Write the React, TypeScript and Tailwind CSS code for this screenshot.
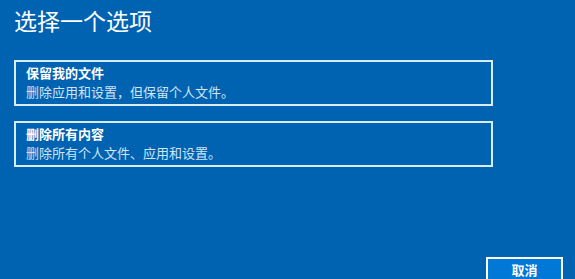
const font = { fontFamily: '"Noto Sans CJK SC", "Noto Sans", sans-serif' };

const options = [
  { title: '保留我的文件', desc: '删除应用和设置，但保留个人文件。' },
  { title: '删除所有内容', desc: '删除所有个人文件、应用和设置。' },
];

export default function App() {
  return (
    <div className="w-[575px] h-[279px] overflow-hidden bg-[#0063b1] text-white" style={font}>
      <div className="pl-[14px] pr-[82px] pt-[5px]">
        <h1 className="text-[23px] leading-[30px]">选择一个选项</h1>
        <div className="mt-[25px] flex flex-col gap-[15px]">
          {options.map((o) => (
            <div key={o.title} className="h-[46px] border-2 border-[#d6ecff] pl-[10px] pt-[2px]">
              <p className="text-[13px] leading-[18px] font-bold">{o.title}</p>
              <p className="text-[13px] leading-[19px] text-[#cfe4f7]">{o.desc}</p>
            </div>
          ))}
        </div>
      </div>
      <div className="flex justify-end pr-[12px] mt-[90px]">
        <button className="w-[77px] h-[30px] bg-[#0078d7] border-2 border-white text-[13px] font-bold leading-none pb-[5px]">取消</button>
      </div>
    </div>
  );
}
